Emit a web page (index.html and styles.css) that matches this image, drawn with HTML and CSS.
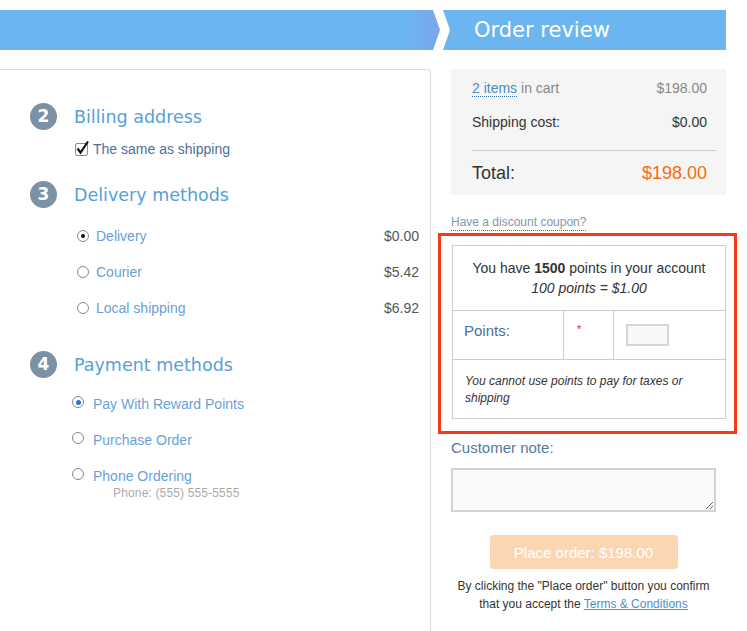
FILE: index.html
```html
<!DOCTYPE html>
<html lang="en">
<head>
    <meta charset="UTF-8">
    <meta name="viewport" content="width=device-width, initial-scale=1.0">
    <title>Order review</title>
    <link rel="stylesheet" href="styles.css">
</head>
<body>
    <div class="steps">
        <div class="step step-prev"></div>
        <div class="step step-current">Order review</div>
    </div>

    <div class="checkout">
        <div class="checkout-left">
            <!-- billing -->
            <div class="section">
                <div class="section-title"><span class="num">2</span><h2>Billing address</h2></div>
                <label class="same-as">
                    <span class="checkbox">
                        <svg width="16" height="16" viewBox="0 0 16 16"><path d="M2.5 8.5 L5.5 12.5 L13 1.5" fill="none" stroke="#111" stroke-width="2.2"/></svg>
                    </span>
                    The same as shipping
                </label>
            </div>

            <!-- delivery -->
            <div class="section">
                <div class="section-title"><span class="num">3</span><h2>Delivery methods</h2></div>
                <ul class="delivery-list">
                    <li><span class="radio on"></span><span class="opt">Delivery</span><span class="price">$0.00</span></li>
                    <li><span class="radio"></span><span class="opt">Courier</span><span class="price">$5.42</span></li>
                    <li><span class="radio"></span><span class="opt">Local shipping</span><span class="price">$6.92</span></li>
                </ul>
            </div>

            <!-- payment -->
            <div class="section section-pay">
                <div class="section-title"><span class="num">4</span><h2>Payment methods</h2></div>
                <ul class="payment-list">
                    <li><span class="radio on blue"></span><span class="opt">Pay With Reward Points</span></li>
                    <li><span class="radio"></span><span class="opt">Purchase Order</span></li>
                    <li><span class="radio"></span><span class="opt">Phone Ordering</span></li>
                </ul>
                <div class="phone-note">Phone: (555) 555-5555</div>
            </div>
        </div>

        <div class="checkout-right">
            <div class="summary">
                <div class="sum-row muted"><span><a class="items" href="#">2 items</a> in cart</span><span>$198.00</span></div>
                <div class="sum-row row-ship"><span>Shipping cost:</span><span>$0.00</span></div>
                <div class="sum-line"></div>
                <div class="sum-row total"><span>Total:</span><span class="total-price">$198.00</span></div>
            </div>

            <a class="coupon" href="#">Have a discount coupon?</a>

            <div class="highlight">
                <table class="points">
                    <tr>
                        <td colspan="3" class="points-info">You have <b>1500</b> points in your account<br><i>100 points = $1.00</i></td>
                    </tr>
                    <tr>
                        <td class="points-label">Points:</td>
                        <td class="points-req">*</td>
                        <td class="points-field"><input type="text" class="points-input"></td>
                    </tr>
                    <tr>
                        <td colspan="3" class="points-note">You cannot use points to pay for taxes or shipping</td>
                    </tr>
                </table>
            </div>

            <div class="note-label">Customer note:</div>
            <textarea class="note"></textarea>

            <button class="place-order">Place order: $198.00</button>
            <p class="terms">By clicking the "Place order" button you confirm<br>that you accept the <a href="#">Terms &amp; Conditions</a></p>
        </div>
    </div>
</body>
</html>
```

FILE: styles.css
```css
body {
    margin: 0;
    font-family: "Liberation Sans", Arial, sans-serif;
    font-size: 14px;
    color: #333;
    background: #fff;
    overflow: hidden;
}

/* top steps bar */
.steps {
    display: flex;
    margin-top: 10px;
    height: 40px;
    width: 726px;
}

.step {
    height: 40px;
    background: #6bb6f0;
}

.step-prev {
    width: 440px;
    background: linear-gradient(to right, #6bb6f0 0, #6bb6f0 92%, #7aa6ec 100%);
    clip-path: polygon(0 0, 433px 0, 440px 50%, 433px 100%, 0 100%);
}

.step-current {
    flex: 1;
    margin-left: 3px;
    padding-left: 31px;
    clip-path: polygon(0 0, 100% 0, 100% 100%, 0 100%, 7px 50%);
    color: #fff;
    font-family: "DejaVu Sans", sans-serif;
    font-size: 21px;
    line-height: 40px;
}

/* main */
.checkout {
    display: flex;
    gap: 20px;
    margin-top: 19px;
}

.checkout-left {
    box-sizing: border-box;
    width: 431px;
    height: 562px;
    border-top: 1px solid #ddd;
    border-right: 1px solid #ddd;
    border-top-right-radius: 4px;
    padding-top: 33px;
}

.section-title {
    display: flex;
    align-items: center;
    height: 27px;
}

.num {
    width: 27px;
    height: 27px;
    margin-left: 30px;
    border-radius: 50%;
    background: #7a91a6;
    color: #fff;
    font-family: "DejaVu Sans", sans-serif;
    font-weight: bold;
    font-size: 17px;
    line-height: 27px;
    text-align: center;
}

.section-title h2 {
    margin: 0 0 0 17px;
    font-family: "DejaVu Sans", sans-serif;
    font-weight: normal;
    font-size: 17.5px;
    color: #56a0da;
}

.same-as {
    display: flex;
    align-items: center;
    margin: 11px 0 0 75px;
    height: 16px;
    color: #4f6f99;
}

.checkbox {
    position: relative;
    width: 11px;
    height: 11px;
    margin-right: 5px;
    border: 1px solid #8a8a8a;
    border-radius: 2px;
}

.checkbox svg {
    position: absolute;
    left: -1px;
    top: -4px;
}

.section + .section {
    margin-top: 24px;
}

.section-pay {
    margin-top: 33px !important;
}

ul {
    list-style: none;
    margin: 0;
    padding: 0;
}

.delivery-list {
    margin-top: 18px;
    padding: 0 11px 0 77px;
}

.delivery-list li,
.payment-list li {
    display: flex;
    align-items: center;
    height: 20px;
}

.delivery-list li + li,
.payment-list li + li {
    margin-top: 16px;
}

.radio {
    box-sizing: border-box;
    width: 12px;
    height: 12px;
    border: 1px solid #888;
    border-radius: 50%;
    background: #fff;
    display: flex;
    align-items: center;
    justify-content: center;
}

.radio.on::after {
    content: "";
    width: 4px;
    height: 4px;
    border-radius: 50%;
    background: #111;
}

.radio.blue::after {
    width: 5px;
    height: 5px;
    background: #2e6fd0;
}

.opt {
    margin-left: 7px;
    color: #6a9fd9;
}

.price {
    margin-left: auto;
    color: #555;
}

.payment-list {
    margin-top: 16px;
    padding-left: 72px;
}

.payment-list .radio {
    margin-top: -4px;
}

.payment-list .opt {
    margin-left: 9px;
}

.phone-note {
    margin-left: 113px;
    font-size: 12px;
    letter-spacing: 0.15px;
    line-height: 14px;
    color: #aaa;
}

/* right column */
.checkout-right {
    width: 265px;
}

.summary {
    margin-right: -10px;
    padding: 9px 19px 10px 21px;
    background: #f5f5f5;
}

.sum-row {
    display: flex;
    justify-content: space-between;
    line-height: 20px;
}

.muted {
    color: #888;
}

.items {
    color: #4a8cc8;
    text-decoration: none;
    border-bottom: 1px dotted #3b6fb0;
}

.row-ship {
    margin-top: 14px;
}

.sum-line {
    height: 1px;
    margin: 18px -9px 10px 0;
    background: #ccc;
}

.total {
    font-size: 18px;
    line-height: 24px;
}

.total-price {
    color: #f96a0c;
}

.coupon {
    display: inline-block;
    margin-top: 20px;
    font-size: 12px;
    line-height: 15px;
    color: #8197ad;
    text-decoration: none;
    border-bottom: 1px dotted #3b6fb0;
}

.highlight {
    margin: 2px -21px 0 -13px;
    padding: 9px 8px 12px 11px;
    border: 3px solid #f5391b;
}

.points {
    width: 100%;
    border-collapse: collapse;
}

.points td {
    border: 1px solid #ccc;
    padding: 0;
}

.points-info {
    padding: 12px 0 !important;
    text-align: center;
    line-height: 20px;
}

.points-label {
    width: 111px;
    height: 49px;
    padding: 11px 0 0 11px !important;
    vertical-align: top;
    box-sizing: border-box;
    font-size: 15px;
    line-height: 18px;
    color: #4a6ea0;
}

.points-req {
    width: 50px;
    padding: 12px 0 0 13px !important;
    vertical-align: top;
    box-sizing: border-box;
    color: #e22;
    font-size: 11px;
}

.points-field {
    padding-left: 12px !important;
    vertical-align: middle;
}

.points-input {
    display: block;
    box-sizing: border-box;
    width: 43px;
    height: 22px;
    border: 2px solid #d6d6d6;
    background: #f8f8f8;
}

.points-note {
    padding: 13px 12px 11px !important;
    font-size: 12px;
    font-style: italic;
    line-height: 17px;
}

.note-label {
    margin-top: 5px;
    font-size: 15px;
    line-height: 18px;
    color: #5578a0;
}

.note {
    display: block;
    box-sizing: border-box;
    width: 265px;
    height: 44px;
    margin-top: 11px;
    border: 2px solid #d3d3d3;
    background: #fafafa;
    resize: vertical;
}

.place-order {
    display: block;
    width: 188px;
    height: 34px;
    margin: 23px auto 0;
    border: none;
    border-radius: 4px;
    background: #fbd6b2;
    color: #fff;
    font-family: "Liberation Sans", Arial, sans-serif;
    font-size: 15px;
}

.terms {
    margin: 8px 0 0;
    text-align: center;
    font-size: 12px;
    line-height: 18px;
}

.terms a {
    color: #4a8fcc;
}
```
